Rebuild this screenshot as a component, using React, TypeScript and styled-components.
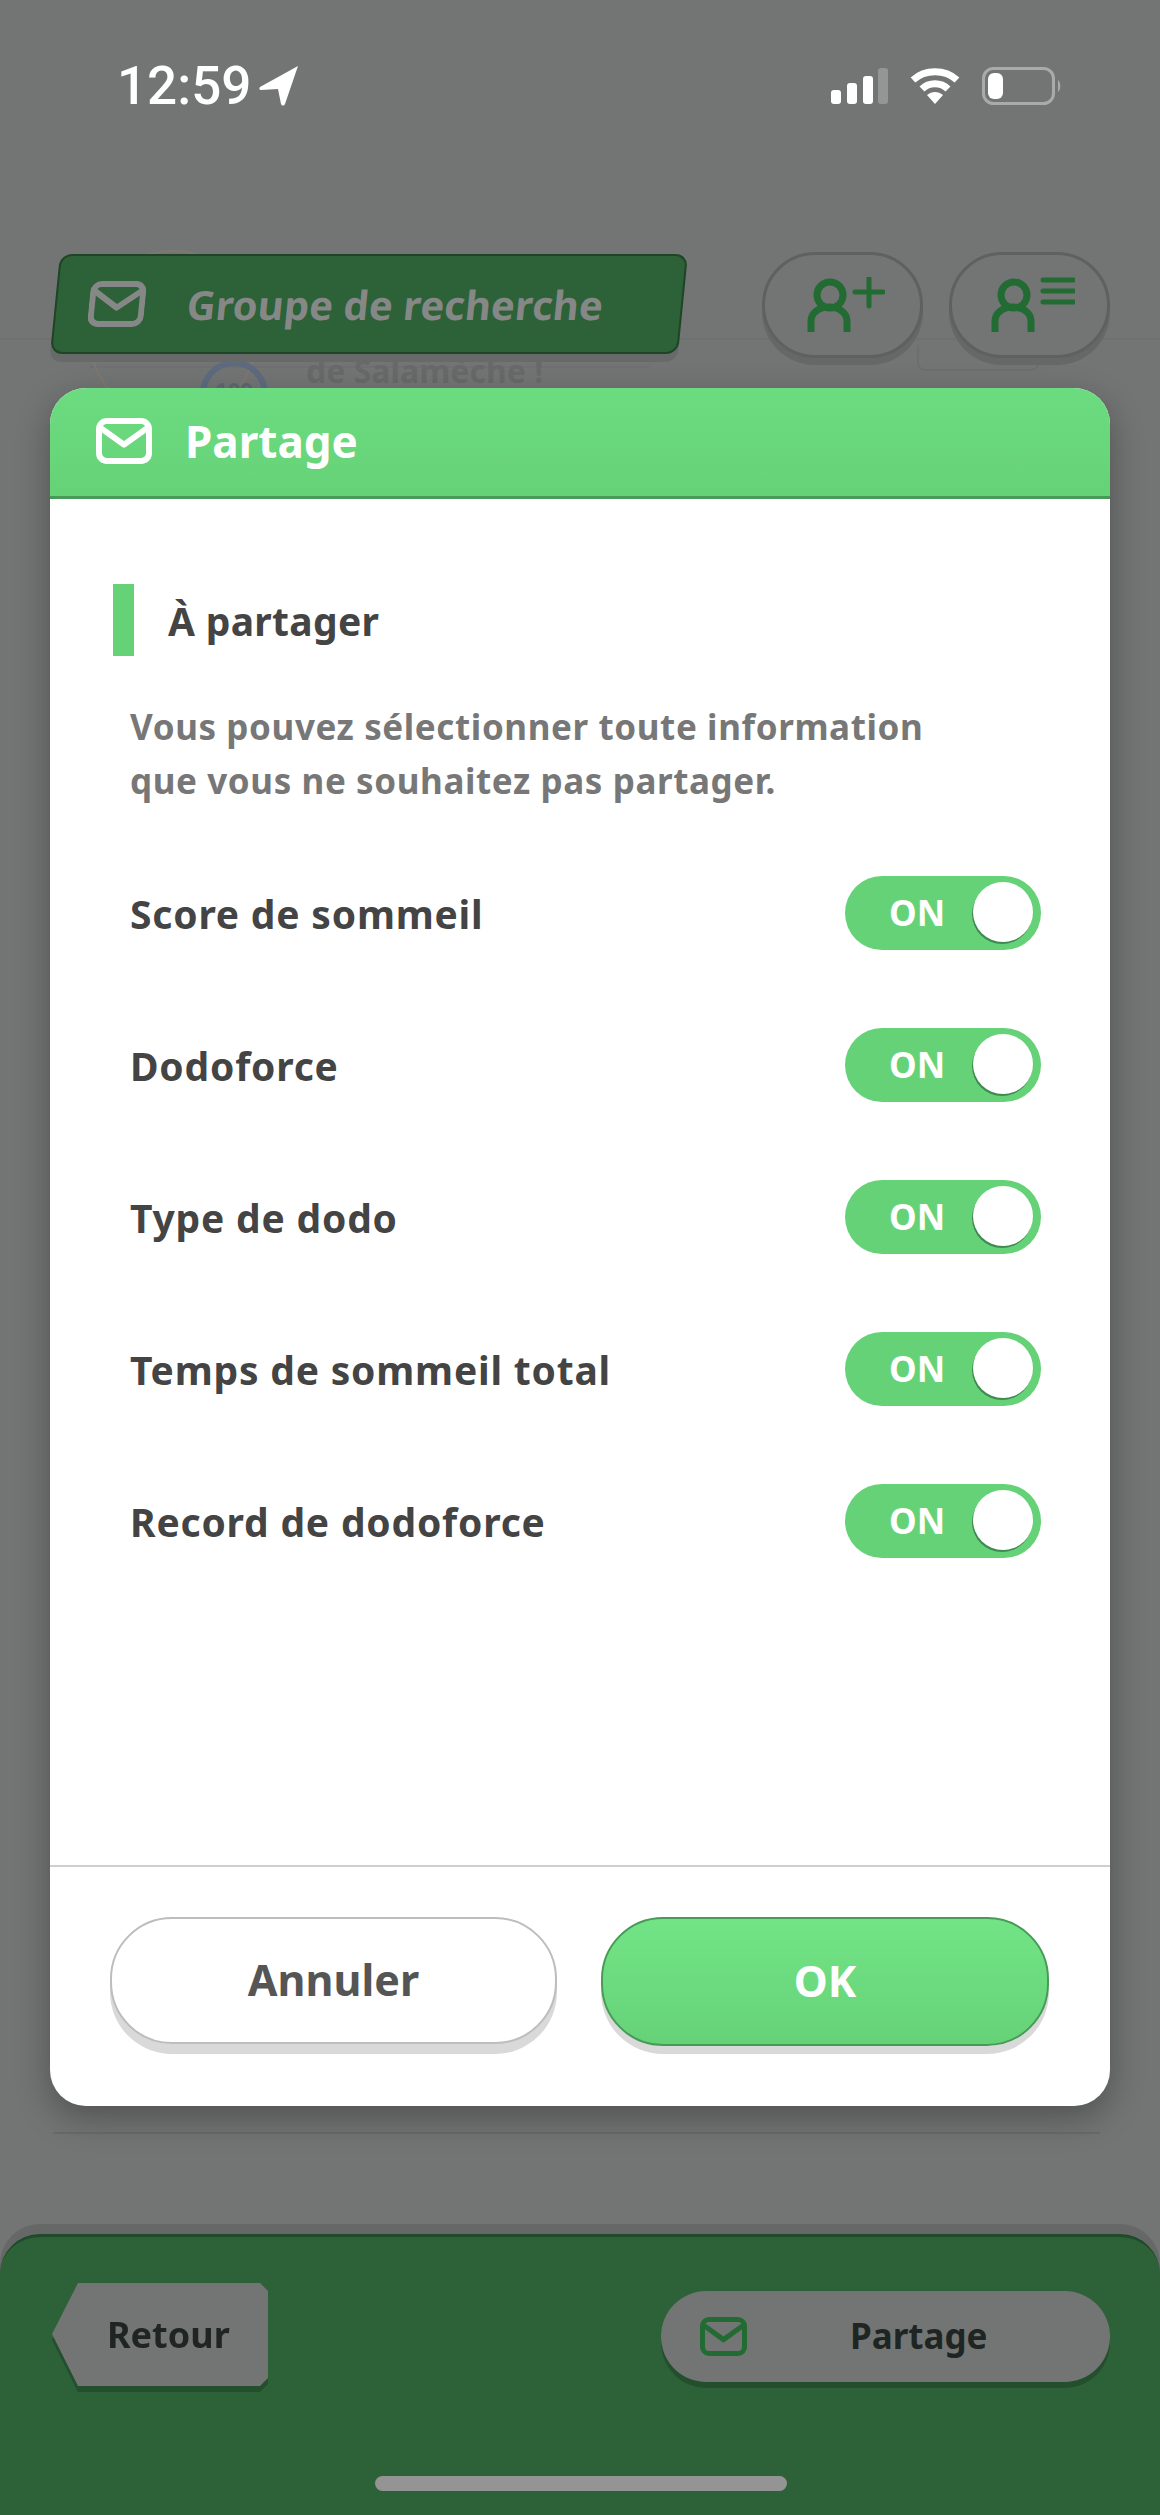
import React from 'react';
import styled, { createGlobalStyle } from 'styled-components';

const GlobalStyle = createGlobalStyle`
  html, body {
    margin: 0;
    padding: 0;
    background: #737574;
  }
  * {
    box-sizing: border-box;
  }
`;

const FONT = `"Noto Sans", "Open Sans", sans-serif`;

const Screen = styled.div`
  position: relative;
  width: 1160px;
  height: 2515px;
  overflow: hidden;
  display: flex;
  flex-direction: column;
  background: #737574;
  font-family: ${FONT};
`;

/* status bar */
const StatusBar = styled.div`
  height: 254px;
  flex: none;
  padding: 61px 98px 0 117px;
  display: flex;
  justify-content: space-between;
  align-items: flex-start;
`;

const Time = styled.div`
  display: flex;
  align-items: center;
  gap: 8px;
  height: 50px;
  color: #fff;
  font-family: Roboto, "Liberation Sans", sans-serif;
  font-size: 53px;
  font-weight: 500;
  line-height: 50px;
`;

const StatusIcons = styled.div`
  display: flex;
  align-items: center;
  gap: 22px;
  height: 50px;
`;

/* top row behind the dialog */
const HeaderRow = styled.div`
  position: relative;
  z-index: 1;
  flex: none;
  height: 112px;
  padding: 0 50px;
  display: flex;
  align-items: flex-start;
`;

const GroupBanner = styled.div`
  width: 628px;
  height: 100px;
  margin-left: 5px;
  padding-left: 32px;
  display: flex;
  align-items: center;
  gap: 42px;
  background: #2d6137;
  border: 2px solid #1e4527;
  border-radius: 12px;
  transform: skewX(-5.7deg);
  box-shadow: 0 8px 0 #686a69;
`;

const GroupLabel = styled.span`
  color: #868887;
  font-size: 40px;
  font-weight: 700;
  letter-spacing: 0.05px;
  white-space: nowrap;
`;

const RoundButton = styled.div<{ $gap: number }>`
  width: 161px;
  height: 106px;
  margin-left: ${(p) => p.$gap}px;
  margin-top: -2px;
  padding-left: 6px;
  display: flex;
  align-items: center;
  justify-content: center;
  background: #737574;
  border: 3px solid #5f6160;
  border-radius: 53px;
  box-shadow: 0 7px 0 #666867;
`;

/* blurred page content that peeks out between the header and the dialog */
const Backdrop = styled.div`
  position: absolute;
  inset: 0;
  pointer-events: none;
`;

const GhostLine = styled.div<{ $top: number; $left: number; $width: number }>`
  position: absolute;
  top: ${(p) => p.$top}px;
  left: ${(p) => p.$left}px;
  width: ${(p) => p.$width}px;
  height: 2px;
  background: #6f7170;
`;

const GhostCircle = styled.div`
  position: absolute;
  top: 250px;
  left: 88px;
  width: 170px;
  height: 170px;
  border-radius: 50%;
  border: 2px solid #7d7872;
`;

const GhostRing = styled.div`
  position: absolute;
  top: 360px;
  left: 200px;
  width: 68px;
  height: 68px;
  padding-top: 10px;
  border-radius: 50%;
  border: 6px solid #5e6b7f;
  color: #5f6770;
  font-size: 22px;
  font-weight: 700;
  text-align: center;
  line-height: 26px;
`;

const GhostText = styled.div`
  position: absolute;
  top: 349px;
  left: 306px;
  color: #686a69;
  font-size: 32px;
  font-weight: 700;
  line-height: 44px;
  white-space: nowrap;
`;

const GhostCard = styled.div`
  position: absolute;
  top: 345px;
  left: 917px;
  width: 122px;
  height: 26px;
  border: 2px solid #6d6f6e;
  border-top: none;
  border-radius: 0 0 8px 8px;
`;

/* dialog */
const Dialog = styled.div`
  position: absolute;
  z-index: 2;
  top: 388px;
  left: 50px;
  width: 1060px;
  height: 1718px;
  display: flex;
  flex-direction: column;
  background: #fff;
  border-radius: 36px;
  overflow: hidden;
`;

const DialogShadow = styled.div`
  position: absolute;
  z-index: 1;
  top: 388px;
  left: 50px;
  width: 1060px;
  height: 1718px;
  border-radius: 36px;
  box-shadow: 0 12px 34px rgba(0, 0, 0, 0.3);
`;

const DialogHeader = styled.div`
  flex: none;
  height: 111px;
  padding: 0 0 2px 46px;
  display: flex;
  align-items: center;
  gap: 33px;
  background: linear-gradient(#6cdc80, #66d278);
  border-bottom: 3px solid #479a58;
`;

const DialogTitle = styled.span`
  color: #fff;
  font-size: 44px;
  font-weight: 700;
`;

const DialogBody = styled.div`
  flex: 1;
  padding: 85px 69px 0 63px;
`;

const SectionTitle = styled.div`
  height: 72px;
  padding-left: 34px;
  display: flex;
  align-items: center;
  border-left: 21px solid #66d278;
  color: #444;
  font-size: 39px;
  font-weight: 700;
  letter-spacing: 0.3px;
`;

const Description = styled.p`
  margin: 44px 0 68px 17px;
  color: #777;
  font-size: 35px;
  font-weight: 700;
  line-height: 54px;
  letter-spacing: 0.6px;
`;

const OptionRow = styled.div`
  height: 152px;
  padding-left: 17px;
  padding-bottom: 78px;
  display: flex;
  align-items: center;
  justify-content: space-between;
  color: #444;
  font-size: 39px;
  font-weight: 700;
  letter-spacing: 0.8px;
`;

const Toggle = styled.div`
  position: relative;
  width: 196px;
  height: 74px;
  padding: 0 0 2px 44px;
  display: flex;
  align-items: center;
  border-radius: 37px;
  background: #66d278;
  color: #fff;
  font-size: 35px;
  font-weight: 700;
  letter-spacing: 0;
`;

const Knob = styled.span`
  position: absolute;
  top: 6px;
  right: 8px;
  width: 60px;
  height: 60px;
  border-radius: 50%;
  background: #fff;
  box-shadow: -1px 2px 0 #3f8a50;
`;

const DialogFooter = styled.div`
  flex: none;
  height: 241px;
  padding: 50px 61px 0 60px;
  display: flex;
  justify-content: space-between;
  align-items: flex-start;
  border-top: 2px solid #cfcfcf;
`;

const FooterButton = styled.div<{ $primary?: boolean }>`
  width: ${(p) => (p.$primary ? 448 : 447)}px;
  height: ${(p) => (p.$primary ? 129 : 127)}px;
  padding-bottom: 2px;
  display: flex;
  align-items: center;
  justify-content: center;
  border-radius: 62px;
  border: 2px solid ${(p) => (p.$primary ? '#479a58' : '#bdbdbd')};
  background: ${(p) => (p.$primary ? 'linear-gradient(#72e486, #66d278)' : '#fff')};
  color: ${(p) => (p.$primary ? '#fff' : '#555')};
  font-size: 43px;
  font-weight: 700;
  box-shadow: 0 ${(p) => (p.$primary ? 8 : 10)}px 0 #d9d9d9;
`;

/* bottom bar */
const PageRule = styled.div`
  position: absolute;
  top: 2132px;
  left: 53px;
  width: 1047px;
  height: 2px;
  background: #696b6a;
`;

const BottomBar = styled.div`
  position: relative;
  flex: none;
  margin-top: auto;
  height: 281px;
  padding: 46px 50px 0 52px;
  display: flex;
  justify-content: space-between;
  align-items: flex-start;
  background: #2d6137;
  border-top: 3px solid #1f4a29;
  border-radius: 40px 40px 0 0;
  box-shadow: 0 -10px 0 #666867;
`;

const BackWrap = styled.div`
  filter: drop-shadow(0 6px 0 #244f2d);
`;

const BackButton = styled.div`
  width: 216px;
  height: 103px;
  padding-left: 55px;
  display: flex;
  align-items: center;
  background: #737574;
  color: #1f2523;
  font-size: 36px;
  font-weight: 700;
  clip-path: polygon(26px 0, 208px 0, 216px 8px, 216px 95px, 208px 103px, 26px 103px, 0 51px);
`;

const ShareButton = styled.div`
  width: 449px;
  height: 91px;
  margin-top: 8px;
  padding-left: 39px;
  display: flex;
  align-items: center;
  background: #737574;
  border-radius: 46px;
  box-shadow: 0 6px 0 #244f2d;
`;

const ShareLabel = styled.span`
  margin-left: 103px;
  padding-bottom: 2px;
  color: #1f2523;
  font-size: 35px;
  font-weight: 700;
`;

const HomeIndicator = styled.div`
  position: absolute;
  left: 375px;
  bottom: 24px;
  width: 412px;
  height: 15px;
  border-radius: 8px;
  background: #949494;
`;

const Envelope = ({ color, width, height, stroke }: { color: string; width: number; height: number; stroke: number }) => (
  <svg width={width} height={height} viewBox={`0 0 ${width} ${height}`} fill="none">
    <rect
      x={stroke / 2}
      y={stroke / 2}
      width={width - stroke}
      height={height - stroke}
      rx={stroke * 1.3}
      stroke={color}
      strokeWidth={stroke}
    />
    <path
      d={`M${stroke * 0.8} ${height * 0.22} L${width / 2} ${height * 0.58} L${width - stroke * 0.8} ${height * 0.22}`}
      stroke={color}
      strokeWidth={stroke}
      strokeLinejoin="round"
    />
  </svg>
);

const PersonPlus = () => (
  <svg width="78" height="56" viewBox="0 0 78 56" fill="none" stroke="#226b33" strokeWidth="7">
    <circle cx="23" cy="18" r="13" />
    <path d="M4 55 V44 C4 36 12 30 22 30 C32 30 40 36 40 44 V55" />
    <path d="M48 15 H76 M62 1 V29" strokeWidth="5" strokeLinecap="round" />
  </svg>
);

const PersonList = () => (
  <svg width="84" height="56" viewBox="0 0 84 56" fill="none" stroke="#226b33" strokeWidth="7">
    <circle cx="23" cy="18" r="13" />
    <path d="M4 55 V44 C4 36 12 30 22 30 C32 30 40 36 40 44 V55" />
    <path d="M52 3 H83 M52 14 H83 M52 25 H83" strokeWidth="5" strokeLinecap="round" />
  </svg>
);

const LocationArrow = () => (
  <svg width="40" height="40" viewBox="0 0 40 40">
    <path d="M1 21 L39 0 L26 38 C25 40 23 40 22 38 L19 23 L2 24 C0 24 0 22 1 21 Z" fill="#fff" />
  </svg>
);

const Signal = () => (
  <svg width="57" height="36" viewBox="0 0 57 36">
    <rect x="0" y="22" width="10" height="14" rx="3" fill="#fff" />
    <rect x="16" y="15" width="10" height="21" rx="3" fill="#fff" />
    <rect x="32" y="8" width="10" height="28" rx="3" fill="#fff" />
    <rect x="47" y="0" width="10" height="36" rx="3" fill="#949695" />
  </svg>
);

const Wifi = () => (
  <svg width="50" height="36" viewBox="0 0 50 36" fill="none" stroke="#fff" strokeWidth="7">
    <path d="M3 12 C15 1 35 1 47 12" />
    <path d="M12 21 C19 14 31 14 38 21" />
    <path d="M17 27 L25 36 L33 27 C28 23 22 23 17 27 Z" fill="#fff" stroke="none" />
  </svg>
);

const Battery = () => (
  <svg width="80" height="38" viewBox="0 0 80 38" fill="none">
    <rect x="1.5" y="1.5" width="70" height="35" rx="10" stroke="#a9abaa" strokeWidth="3" />
    <rect x="6" y="6" width="15" height="26" rx="6" fill="#fff" />
    <path d="M76 13 C79 15 79 23 76 25 Z" fill="#a9abaa" />
  </svg>
);

const options = ['Score de sommeil', 'Dodoforce', 'Type de dodo', 'Temps de sommeil total', 'Record de dodoforce'];

const App = () => {
  return (
    <Screen>
      <GlobalStyle />
      <Backdrop>
        <GhostLine $top={338} $left={0} $width={1160} />
        <GhostLine $top={366} $left={90} $width={560} />
        <GhostCircle />
        <GhostRing>100</GhostRing>
        <GhostText>de Salamèche !</GhostText>
        <GhostCard />
      </Backdrop>
      <StatusBar>
        <Time>
          12:59
          <LocationArrow />
        </Time>
        <StatusIcons>
          <Signal />
          <Wifi />
          <Battery />
        </StatusIcons>
      </StatusBar>
      <HeaderRow>
        <GroupBanner>
          <Envelope color="#868887" width={56} height={46} stroke={6} />
          <GroupLabel>Groupe de recherche</GroupLabel>
        </GroupBanner>
        <RoundButton $gap={79}>
          <PersonPlus />
        </RoundButton>
        <RoundButton $gap={26}>
          <PersonList />
        </RoundButton>
      </HeaderRow>
      <PageRule />
      <DialogShadow />
      <Dialog>
        <DialogHeader>
          <Envelope color="#fff" width={56} height={46} stroke={6} />
          <DialogTitle>Partage</DialogTitle>
        </DialogHeader>
        <DialogBody>
          <SectionTitle>À partager</SectionTitle>
          <Description>
            Vous pouvez sélectionner toute information
            <br />
            que vous ne souhaitez pas partager.
          </Description>
          {options.map((option) => (
            <OptionRow key={option}>
              <span>{option}</span>
              <Toggle>
                ON
                <Knob />
              </Toggle>
            </OptionRow>
          ))}
        </DialogBody>
        <DialogFooter>
          <FooterButton>Annuler</FooterButton>
          <FooterButton $primary>OK</FooterButton>
        </DialogFooter>
      </Dialog>
      <BottomBar>
        <BackWrap>
          <BackButton>Retour</BackButton>
        </BackWrap>
        <ShareButton>
          <Envelope color="#226b33" width={47} height={39} stroke={5} />
          <ShareLabel>Partage</ShareLabel>
        </ShareButton>
        <HomeIndicator />
      </BottomBar>
    </Screen>
  );
};

export default App;
